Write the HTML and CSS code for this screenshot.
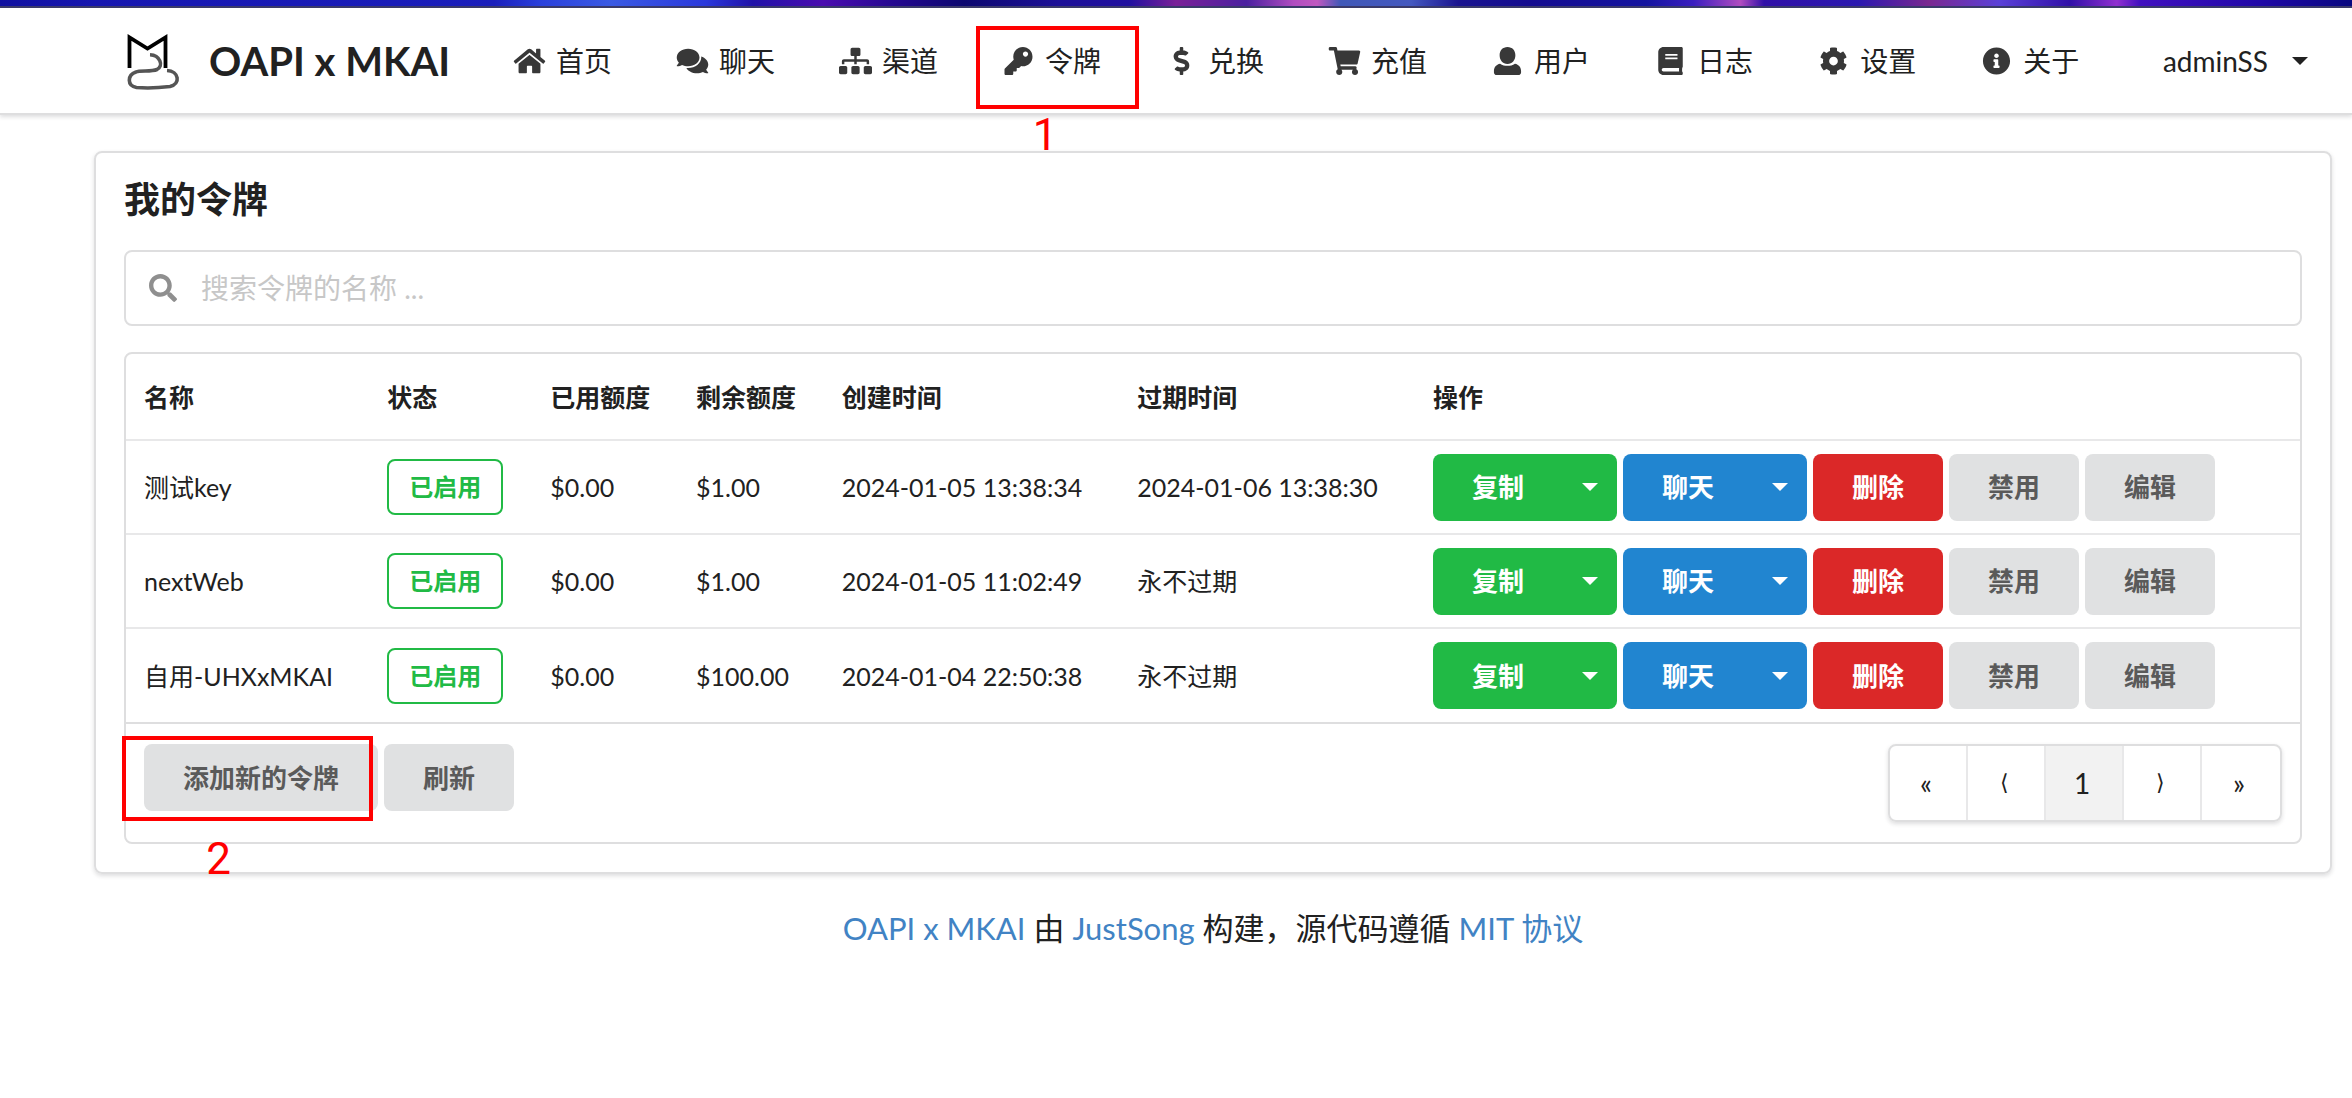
FILE: index.html
```html
<!DOCTYPE html>
<html lang="zh-CN">
<head>
<meta charset="utf-8">
<title>OAPI x MKAI</title>
<link rel="stylesheet" href="styles.css">
</head>
<body>
<div class="backdrop"></div>
<header class="menu">
  <a class="brand" href="#">
    <svg class="logo" viewBox="0 0 56 60" fill="none" aria-hidden="true">
      <path d="M5.500 37V6.500L23.500 17.500L41.500 6.500V37" stroke="#000" stroke-width="3.800"/>
      <path d="M26 23.700C36 24 40 35 33 38.500C27 41 16 39 12 41C3 44 3 55 12.500 56.500C24 57.500 34 57 46 55.500C57 53 55 40 43 39.500" stroke="#555" stroke-width="3.600"/>
    </svg>
    <span>OAPI x MKAI</span>
  </a>
  <nav class="nav">
    <a class="item" href="#"><svg class="icon" viewBox="0 0 576 512"><path d="M488 312.700V456c0 13.300-10.700 24-24 24H348c-6.600 0-12-5.400-12-12V356c0-6.600-5.400-12-12-12h-72c-6.600 0-12 5.400-12 12v112c0 6.600-5.400 12-12 12H112c-13.300 0-24-10.700-24-24V312.700c0-3.600 1.600-7 4.400-9.300l188-154.800c4.400-3.600 10.800-3.600 15.300 0l188 154.800c2.700 2.300 4.300 5.700 4.300 9.300zm83.600-60.900L488 182.900V44.400c0-6.600-5.400-12-12-12h-56c-6.600 0-12 5.400-12 12V117l-89.500-73.700c-17.700-14.600-43.300-14.600-61 0L4.400 251.800c-5.100 4.200-5.800 11.800-1.600 16.900l25.500 31c4.200 5.100 11.800 5.800 16.900 1.600l235.200-193.700c4.400-3.600 10.800-3.600 15.300 0l235.200 193.700c5.100 4.200 12.700 3.500 16.900-1.600l25.500-31c4.200-5.200 3.400-12.700-1.700-16.900z"/></svg>首页</a>
    <a class="item" href="#"><svg class="icon" viewBox="0 0 576 512"><path d="M416 192c0-88.400-93.100-160-208-160S0 103.600 0 192c0 34.300 14.100 65.900 38 92-13.400 30.200-35.500 54.200-35.800 54.500-2.200 2.300-2.800 5.700-1.500 8.700S4.800 352 8 352c36.600 0 66.900-12.300 88.700-25 32.200 15.700 70.300 25 111.300 25 114.900 0 208-71.600 208-160zm122 220c23.900-26 38-57.700 38-92 0-66.900-53.500-124.200-129.300-148.100.9 6.600 1.300 13.300 1.300 20.100 0 105.900-107.700 192-240 192-10.800 0-21.300-.8-31.700-1.900C207.800 439.600 281.800 480 368 480c41 0 79.100-9.200 111.300-25 21.800 12.700 52.100 25 88.700 25 3.200 0 6.100-1.900 7.300-4.800 1.300-2.900.7-6.300-1.500-8.700-.3-.3-22.400-24.200-35.800-54.500z"/></svg>聊天</a>
    <a class="item" href="#"><svg class="icon" viewBox="0 0 640 512"><path d="M128 352H32c-17.700 0-32 14.300-32 32v96c0 17.700 14.300 32 32 32h96c17.700 0 32-14.300 32-32v-96c0-17.700-14.300-32-32-32zm-24-80h192v48h48v-48h192v48h48v-57.600c0-21.200-17.200-38.400-38.400-38.400H344v-64h40c17.700 0 32-14.300 32-32V32c0-17.700-14.300-32-32-32H256c-17.700 0-32 14.300-32 32v96c0 17.700 14.300 32 32 32h40v64H94.400C73.200 224 56 241.200 56 262.400V320h48v-48zm264 80h-96c-17.700 0-32 14.300-32 32v96c0 17.700 14.300 32 32 32h96c17.700 0 32-14.300 32-32v-96c0-17.700-14.300-32-32-32zm240 0h-96c-17.700 0-32 14.300-32 32v96c0 17.700 14.300 32 32 32h96c17.700 0 32-14.300 32-32v-96c0-17.700-14.300-32-32-32z"/></svg>渠道</a>
    <a class="item" href="#"><svg class="icon" viewBox="0 0 512 512"><path d="M512 176c0 97.200-78.800 176-176 176-11.200 0-22.200-1.100-32.800-3.100l-24 27c-4.500 5.100-11.100 8.100-17.900 8.100H224v40c0 13.300-10.700 24-24 24h-40v40c0 13.300-10.700 24-24 24H24c-13.300 0-24-10.700-24-24v-78.100c0-6.400 2.500-12.500 7-17l161.800-161.800c-5.700-17.400-8.800-35.900-8.800-55.200C160 78.800 238.800 0 336 0c97.500 0 176 78.500 176 176zM336 128c0 26.500 21.500 48 48 48s48-21.500 48-48-21.500-48-48-48-48 21.500-48 48z"/></svg>令牌<span class="mark mark-nav"><span class="mark-digit">1</span></span></a>
    <a class="item" href="#"><svg class="icon" viewBox="0 0 288 512"><path d="M209.200 233.400l-108-31.600C88.700 198.200 80 186.500 80 173.500c0-16.300 13.200-29.500 29.500-29.500h66.300c12.200 0 24.200 3.700 34.200 10.500 6.100 4.100 14.300 3.100 19.500-2l34.800-34c7.100-6.900 6.100-18.400-1.800-24.500C238 74.800 207.400 64.100 176 64V16c0-8.800-7.200-16-16-16h-32c-8.800 0-16 7.200-16 16v48h-2.500C45.800 64-5.400 118.700.5 183.600c4.200 46.100 39.400 83.600 83.800 96.600l102.500 30c12.500 3.700 21.200 15.300 21.200 28.300 0 16.300-13.200 29.500-29.500 29.500h-66.300C100 368 88 364.300 78 357.500c-6.100-4.100-14.300-3.100-19.500 2l-34.800 34c-7.100 6.900-6.100 18.400 1.800 24.500 24.500 19.200 55.100 29.900 86.500 30v48c0 8.800 7.200 16 16 16h32c8.800 0 16-7.200 16-16v-48.200c46.600-.9 90.300-28.600 105.700-72.700 21.500-61.600-14.600-124.800-72.500-141.700z"/></svg>兑换</a>
    <a class="item" href="#"><svg class="icon" viewBox="0 0 576 512"><path d="M528.100 301.300l47.300-208C578.800 78.300 567.400 64 552 64H159.200l-9.200-44.800C147.800 8 137.900 0 126.500 0H24C10.700 0 0 10.700 0 24v16c0 13.300 10.700 24 24 24h69.900l70.200 343.400C147.300 417.100 136 435.200 136 456c0 30.900 25.100 56 56 56s56-25.100 56-56c0-15.700-6.400-29.800-16.800-40h209.600C430.400 426.200 424 440.300 424 456c0 30.900 25.100 56 56 56s56-25.100 56-56c0-22.200-12.900-41.300-31.600-50.400l5.500-24.300c3.400-15-8-29.300-23.400-29.300H218.100l-6.500-32h293.100c11.200 0 20.900-7.800 23.400-18.700z"/></svg>充值</a>
    <a class="item" href="#"><svg class="icon" viewBox="0 0 512 512"><path d="M256 0c88.400 0 144 64.500 144 152s-55.600 160-144 160-144-72.500-144-160S167.600 0 256 0zM120 304c80 53 192 53 272 0 70 12 112 66 112 136v24c0 26.500-21.500 48-48 48H56c-26.500 0-48-21.500-48-48v-24c0-70 42-124 112-136z"/></svg>用户</a>
    <a class="item" href="#"><svg class="icon" viewBox="0 0 448 512"><path d="M448 360V24c0-13.300-10.700-24-24-24H96C43 0 0 43 0 96v320c0 53 43 96 96 96h328c13.300 0 24-10.700 24-24v-16c0-7.500-3.500-14.300-8.900-18.700-4.200-15.400-4.200-59.300 0-74.700 5.400-4.300 8.900-11.100 8.900-18.600zM128 134c0-3.300 2.700-6 6-6h212c3.300 0 6 2.700 6 6v20c0 3.300-2.700 6-6 6H134c-3.300 0-6-2.700-6-6v-20zm0 64c0-3.300 2.700-6 6-6h212c3.300 0 6 2.700 6 6v20c0 3.300-2.700 6-6 6H134c-3.300 0-6-2.700-6-6v-20zm253.400 250H96c-17.700 0-32-14.300-32-32 0-17.600 14.400-32 32-32h285.400c-1.900 17.100-1.900 46.900 0 64z"/></svg>日志</a>
    <a class="item" href="#"><svg class="icon" viewBox="0 0 512 512"><path d="M487.400 315.700l-42.600-24.600c4.300-23.200 4.300-47 0-70.200l42.600-24.600c4.900-2.800 7.100-8.600 5.500-14-11.100-35.600-30-67.800-54.700-94.600-3.800-4.100-10-5.100-14.800-2.300L380.800 110c-17.900-15.400-38.500-27.300-60.800-35.100V25.800c0-5.600-3.900-10.500-9.400-11.700-36.700-8.200-74.300-7.800-109.200 0-5.500 1.200-9.400 6.100-9.400 11.700V75c-22.200 7.900-42.800 19.800-60.800 35.100L88.700 85.500c-4.900-2.800-11-1.900-14.800 2.300-24.700 26.700-43.600 58.900-54.700 94.600-1.700 5.400.6 11.200 5.500 14L67.300 221c-4.300 23.200-4.300 47 0 70.200l-42.600 24.600c-4.900 2.800-7.100 8.600-5.500 14 11.100 35.600 30 67.800 54.700 94.600 3.800 4.100 10 5.100 14.800 2.300l42.600-24.600c17.900 15.400 38.500 27.300 60.800 35.100v49.200c0 5.600 3.900 10.500 9.400 11.700 36.700 8.200 74.300 7.800 109.200 0 5.500-1.200 9.400-6.100 9.400-11.700v-49.200c22.200-7.900 42.800-19.800 60.800-35.100l42.600 24.600c4.900 2.800 11 1.900 14.800-2.300 24.700-26.700 43.600-58.900 54.700-94.600 1.500-5.500-.7-11.300-5.600-14.100zM256 336c-44.100 0-80-35.900-80-80s35.900-80 80-80 80 35.900 80 80-35.900 80-80 80z"/></svg>设置</a>
    <a class="item" href="#"><svg class="icon" viewBox="0 0 512 512"><path d="M256 8C119 8 8 119.100 8 256c0 137 111 248 248 248s248-111 248-248C504 119.100 393 8 256 8zm0 110c23.200 0 42 18.800 42 42s-18.800 42-42 42-42-18.800-42-42 18.800-42 42-42zm56 254c0 6.600-5.400 12-12 12h-88c-6.600 0-12-5.400-12-12v-24c0-6.600 5.400-12 12-12h12v-64h-12c-6.600 0-12-5.400-12-12v-24c0-6.600 5.400-12 12-12h64c6.600 0 12 5.400 12 12v100h12c6.600 0 12 5.400 12 12v24z"/></svg>关于</a>
  </nav>
  <button class="account" type="button">adminSS<span class="caret"></span></button>
</header>

<main class="page">
  <section class="card">
    <h1 class="title">我的令牌</h1>
    <label class="search">
      <svg class="search-icon" viewBox="0 0 512 512" aria-hidden="true"><path d="M505 442.700L405.300 343c-4.500-4.500-10.600-7-17-7H372c27.600-35.300 44-79.700 44-128C416 93.100 322.900 0 208 0S0 93.100 0 208s93.100 208 208 208c48.300 0 92.700-16.400 128-44v16.300c0 6.400 2.500 12.500 7 17l99.700 99.700c9.400 9.400 24.600 9.400 33.900 0l28.300-28.300c9.400-9.400 9.400-24.600.1-34zM208 336c-70.700 0-128-57.200-128-128 0-70.700 57.200-128 128-128 70.700 0 128 57.200 128 128 0 70.700-57.200 128-128 128z"/></svg>
      <input class="search-input" type="text" placeholder="搜索令牌的名称 ..." aria-label="搜索令牌的名称">
    </label>

    <div class="table-box">
      <table class="tokens">
        <colgroup><col class="c-name"><col class="c-status"><col class="c-quota"><col class="c-quota"><col class="c-time"><col class="c-time"><col></colgroup>
        <thead>
          <tr><th>名称</th><th>状态</th><th>已用额度</th><th>剩余额度</th><th>创建时间</th><th>过期时间</th><th>操作</th></tr>
        </thead>
        <tbody>
          <tr>
            <td>测试key</td><td><span class="label">已启用</span></td><td>$0.00</td><td>$1.00</td><td>2024-01-05 13:38:34</td><td>2024-01-06 13:38:30</td>
            <td><div class="actions"><button class="btn green split" type="button">复制<span class="caret"></span></button><button class="btn blue split" type="button">聊天<span class="caret"></span></button><button class="btn red" type="button">删除</button><button class="btn" type="button">禁用</button><button class="btn" type="button">编辑</button></div></td>
          </tr>
          <tr>
            <td>nextWeb</td><td><span class="label">已启用</span></td><td>$0.00</td><td>$1.00</td><td>2024-01-05 11:02:49</td><td>永不过期</td>
            <td><div class="actions"><button class="btn green split" type="button">复制<span class="caret"></span></button><button class="btn blue split" type="button">聊天<span class="caret"></span></button><button class="btn red" type="button">删除</button><button class="btn" type="button">禁用</button><button class="btn" type="button">编辑</button></div></td>
          </tr>
          <tr>
            <td>自用-UHXxMKAI</td><td><span class="label">已启用</span></td><td>$0.00</td><td>$100.00</td><td>2024-01-04 22:50:38</td><td>永不过期</td>
            <td><div class="actions"><button class="btn green split" type="button">复制<span class="caret"></span></button><button class="btn blue split" type="button">聊天<span class="caret"></span></button><button class="btn red" type="button">删除</button><button class="btn" type="button">禁用</button><button class="btn" type="button">编辑</button></div></td>
          </tr>
        </tbody>
      </table>
      <div class="table-footer">
        <div class="actions">
          <div class="marked"><button class="btn" type="button">添加新的令牌</button><span class="mark mark-add"><span class="mark-digit">2</span></span></div>
          <button class="btn" type="button">刷新</button>
        </div>
        <nav class="pager" aria-label="分页">
          <a href="#">«</a><a class="step" href="#">⟨</a><a class="current" href="#">1</a><a class="step" href="#">⟩</a><a href="#">»</a>
        </nav>
      </div>
    </div>
  </section>
</main>

<footer class="footer"><a href="#">OAPI x MKAI</a> 由 <a href="#">JustSong</a> 构建，源代码遵循 <a href="#">MIT 协议</a></footer>
</body>
</html>
```

FILE: styles.css
```css
* { box-sizing: border-box; }

body {
  margin: 0;
  background: #fff;
  color: #212121;
  font: 28px/40px Lato, "Noto Sans CJK SC", sans-serif;
}

a { color: #4183c4; text-decoration: none; }
button { font: inherit; cursor: pointer; }

.backdrop {
  height: 8px;
  border-bottom: 2px solid #3b3b6b;
  background: linear-gradient(90deg,
    #1010a0 0%, #1616b0 4%, #1a1ebc 21%, #2a40dc 23%, #3a5ae4 26%, #2a38dc 30%,
    #2012a8 32%, #4a0cb0 35%, #240890 38%, #0c0870 41%, #1c1098 45%, #2010a0 48%,
    #7a2098 50%, #4a20a0 53%, #b04cc0 55%, #c058c0 56%, #4058b8 57%, #4458c0 60%,
    #1a1490 62%, #140c90 65%, #1414a0 70%, #3a1ec0 72%, #b04cc0 74%, #3010a8 75%,
    #2a18b0 79%, #7a2890 82%, #5a40d8 85%, #3010a8 88%, #9030d0 90%, #4010c0 91%,
    #2008a8 96%, #080880 100%);
}

/* Top menu */
.menu {
  display: flex;
  align-items: center;
  height: 107px;
  padding: 0 24px 0 124px;
  border-bottom: 2px solid #dededf;
  box-shadow: 0 2px 4px rgba(34, 36, 38, .15);
}
.brand {
  display: flex;
  align-items: center;
  gap: 29px;
  width: 357px;
  color: #212121;
  font-size: 40px;
  font-weight: 700;
  white-space: nowrap;
}
.logo { width: 56px; height: 60px; }
.nav { display: flex; align-self: stretch; }
.item {
  position: relative;
  display: flex;
  align-items: center;
  gap: 10px;
  padding: 0 32px;
  color: #212121;
  white-space: nowrap;
}
.icon { width: 33px; height: 28px; fill: #383838; overflow: visible; }
.account {
  display: flex;
  align-items: center;
  gap: 24px;
  margin-left: auto;
  padding: 20px;
  border: 0;
  background: none;
  color: #212121;
}
.caret {
  border: 8px solid transparent;
  border-top-color: currentColor;
  border-bottom: 0;
}

/* Token card */
.page { padding: 36px 20px 0 94px; }
.card {
  padding: 26px 28px 28px;
  border: 2px solid #dededf;
  border-radius: 8px;
  box-shadow: 0 2px 4px rgba(34, 36, 38, .15);
}
.title {
  margin: 0 0 31px;
  font-size: 36px;
  line-height: 40px;
  font-weight: 700;
}
.search {
  display: flex;
  align-items: center;
  gap: 24px;
  height: 76px;
  margin-bottom: 26px;
  padding: 0 23px;
  border: 2px solid #dededf;
  border-radius: 8px;
}
.search-icon { width: 28px; height: 28px; fill: #8f8f8f; }
.search-input {
  flex: 1;
  padding: 0;
  border: 0;
  outline: 0;
  background: none;
  font: inherit;
}
.search-input::placeholder { color: #c7c7c7; opacity: 1; }

.table-box { border: 2px solid #dededf; border-radius: 8px; }
.tokens {
  width: 100%;
  table-layout: fixed;
  border-collapse: collapse;
  font-size: 25px;
  white-space: nowrap;
}
.c-name { width: 11.1%; }
.c-status { width: 7.5%; }
.c-quota { width: 6.7%; }
.c-time { width: 13.6%; }
.tokens th, .tokens td { padding: 0 20px; text-align: left; }
.tokens th:first-child, .tokens td:first-child { padding-left: 18px; }
.tokens th { height: 86px; font-weight: 700; }
.tokens td { height: 94px; border-top: 2px solid #e8e8e9; }
.label {
  display: inline-block;
  padding: 6px 20px;
  border: 2px solid #21ba45;
  border-radius: 8px;
  color: #21ba45;
  font-size: 24px;
  font-weight: 700;
  vertical-align: middle;
}
.actions { display: flex; gap: 6px; }
.btn {
  height: 67px;
  padding: 0 39px;
  border: 0;
  border-radius: 8px;
  background: #e0e1e2;
  color: #5a5a5a;
  font-size: 26px;
  font-weight: 700;
}
.green { background: #21ba45; color: #fff; }
.blue { background: #2185d0; color: #fff; }
.red { background: #db2828; color: #fff; }
.split {
  display: flex;
  align-items: center;
  justify-content: space-between;
  width: 184px;
  padding-right: 19px;
}

.table-footer {
  display: flex;
  align-items: flex-start;
  justify-content: space-between;
  padding: 20px 18px;
  border-top: 2px solid #dededf;
}
.pager {
  display: flex;
  border: 2px solid #dededf;
  border-radius: 8px;
  box-shadow: 0 2px 4px rgba(34, 36, 38, .15);
}
.pager a {
  width: 78px;
  height: 74px;
  padding-right: 4px;
  border-right: 2px solid #e8e8e9;
  color: #212121;
  line-height: 74px;
  text-align: center;
}
.pager a:last-child { border-right: 0; }
.pager .current { background: #f2f2f2; }
.pager .step { font-family: "DejaVu Sans Light", "DejaVu Sans", sans-serif; font-size: 22px; font-weight: 200; }

/* Red call-outs laid over the controls they number */
.marked { position: relative; }
.mark { position: absolute; border: 4px solid #f00; pointer-events: none; }
.mark-nav { top: 18px; left: 6px; width: 163px; height: 83px; }
.mark-add { top: -8px; left: -22px; width: 251px; height: 85px; }
.mark-digit {
  position: absolute;
  top: 100%;
  color: #f00;
  font: 44px/52px Roboto, sans-serif;
}
.mark-nav .mark-digit { left: 34%; padding-top: 4px; }
.mark-add .mark-digit { left: 33%; padding-top: 16px; }

.footer { padding: 34px 20px 36px 94px; font-size: 31px; text-align: center; }
```
